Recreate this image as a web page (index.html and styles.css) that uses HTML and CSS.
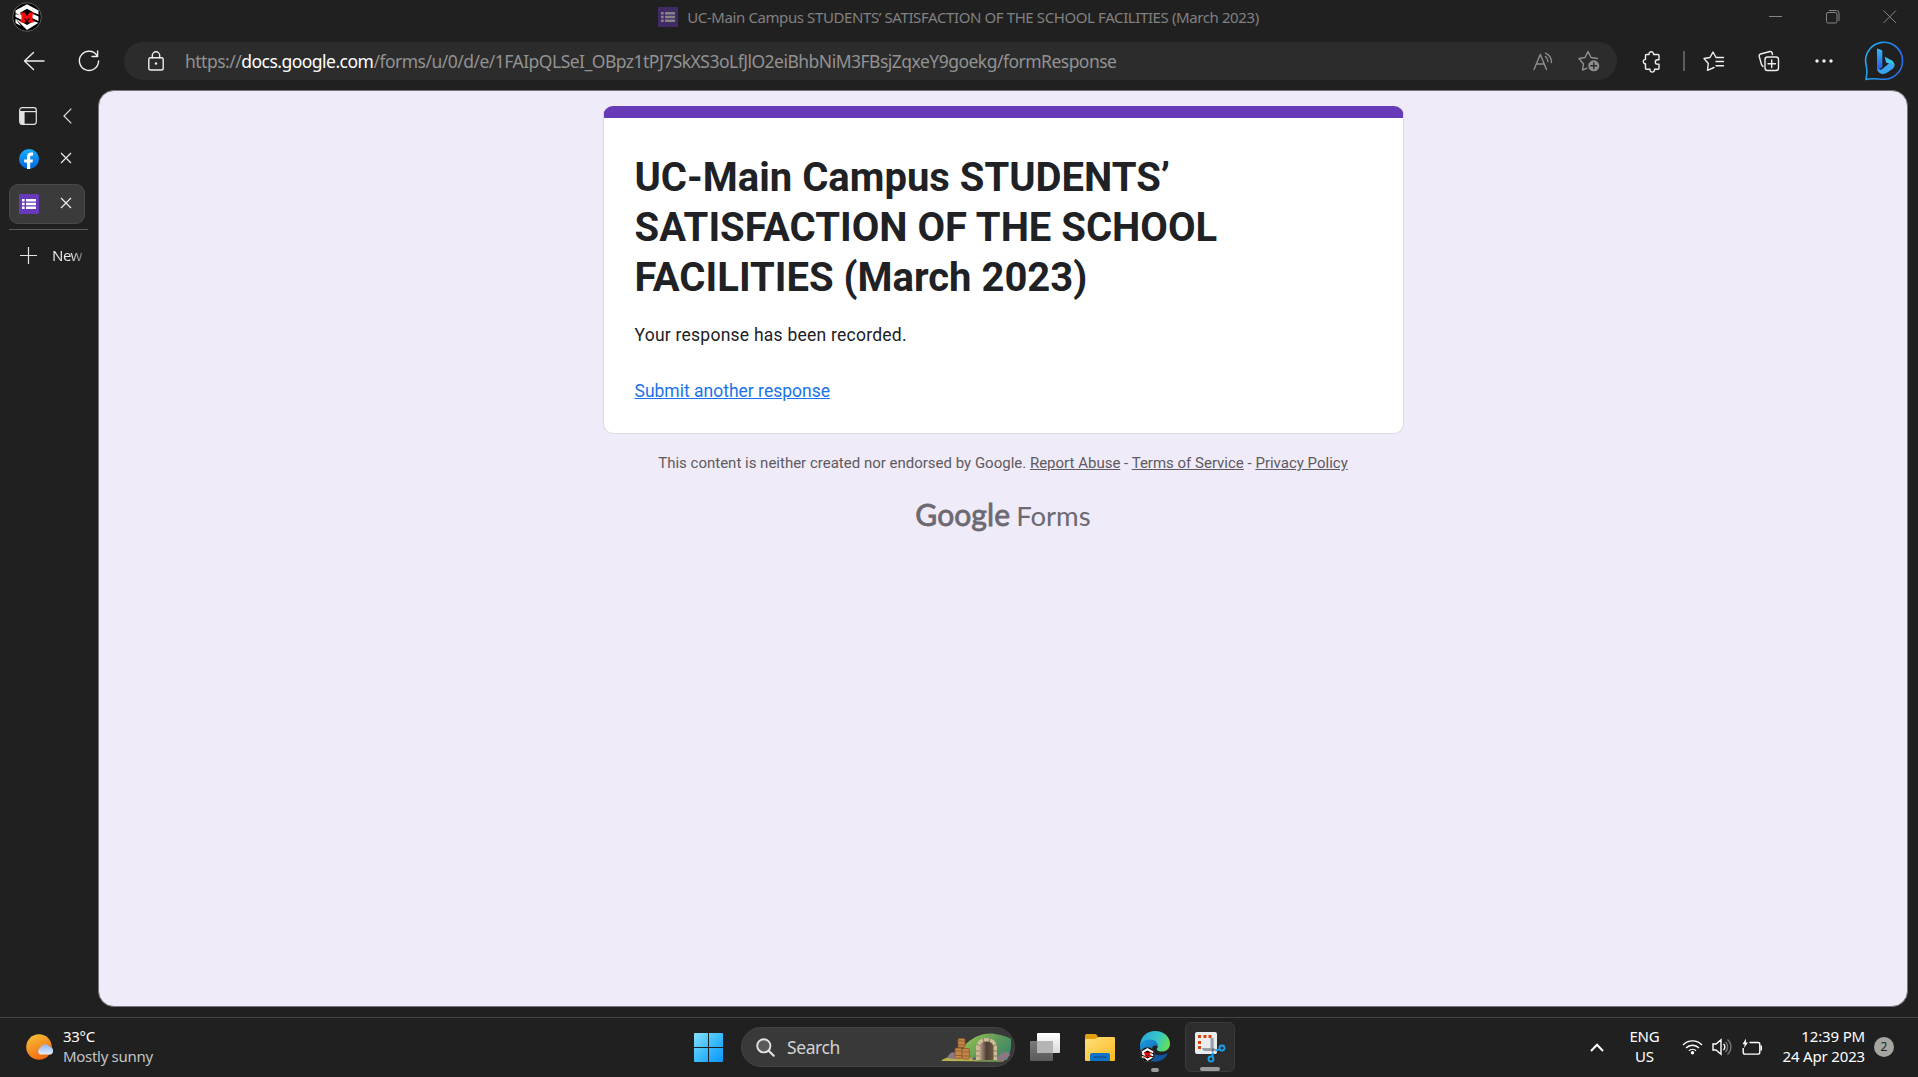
FILE: index.html
```html
<!DOCTYPE html>
<html lang="en">
<head>
<meta charset="utf-8">
<title>UC-Main Campus STUDENTS’ SATISFACTION OF THE SCHOOL FACILITIES (March 2023)</title>
<link rel="stylesheet" href="styles.css">
</head>
<body>
<svg class="defs" width="0" height="0">
  <defs>
    <linearGradient id="fb" x1="0" y1="0" x2="0" y2="1"><stop offset="0" stop-color="#19b0fb"/><stop offset="1" stop-color="#0165e2"/></linearGradient>
    <linearGradient id="bingRing" x1="0" y1="0" x2="1" y2="0.3"><stop offset="0" stop-color="#1bb5e8"/><stop offset="1" stop-color="#2b6ff0"/></linearGradient>
    <linearGradient id="bingB" x1="0" y1="0" x2="0" y2="1"><stop offset="0" stop-color="#3bb8fa"/><stop offset="1" stop-color="#2455e6"/></linearGradient>
    <linearGradient id="bingC" x1="0" y1="0" x2="1" y2="0"><stop offset="0" stop-color="#3fb6f7"/><stop offset="1" stop-color="#35d5e8"/></linearGradient>
    <linearGradient id="sun" x1="0.2" y1="0" x2="0.7" y2="1"><stop offset="0" stop-color="#f7bf36"/><stop offset="1" stop-color="#f0640e"/></linearGradient>
    <linearGradient id="cloud" x1="0" y1="0" x2="0" y2="1"><stop offset="0" stop-color="#8fb6f0"/><stop offset="1" stop-color="#e3eeff"/></linearGradient>
    <linearGradient id="win" gradientUnits="userSpaceOnUse" x1="0" y1="0" x2="29" y2="29"><stop offset="0" stop-color="#85e0fd"/><stop offset="0.5" stop-color="#3bbcfb"/><stop offset="1" stop-color="#0a95fb"/></linearGradient>
    <linearGradient id="hill" x1="0" y1="0" x2="1" y2="0.6"><stop offset="0" stop-color="#9cc653"/><stop offset="0.6" stop-color="#5f9a58"/><stop offset="1" stop-color="#3f8a68"/></linearGradient>
    <linearGradient id="door" x1="0" y1="0" x2="1" y2="0"><stop offset="0" stop-color="#c2a68e"/><stop offset="0.5" stop-color="#4f3f35"/><stop offset="1" stop-color="#6d5846"/></linearGradient>
    <linearGradient id="tv1" x1="0" y1="0" x2="0" y2="1"><stop offset="0" stop-color="#ffffff"/><stop offset="1" stop-color="#d9d9d9"/></linearGradient>
    <linearGradient id="tv2" x1="0" y1="0" x2="0" y2="1"><stop offset="0" stop-color="#7b7b7b"/><stop offset="1" stop-color="#5a5a5a"/></linearGradient>
    <linearGradient id="folder" x1="0" y1="0" x2="1" y2="1"><stop offset="0" stop-color="#ffe07a"/><stop offset="1" stop-color="#fdba20"/></linearGradient>
    <linearGradient id="edgeTop" x1="0" y1="0.3" x2="1" y2="0.6"><stop offset="0" stop-color="#2aa5dc"/><stop offset="0.55" stop-color="#37c6c9"/><stop offset="1" stop-color="#66e052"/></linearGradient>
    <linearGradient id="edgeLow" x1="0" y1="0" x2="1" y2="1"><stop offset="0" stop-color="#1b9de2"/><stop offset="1" stop-color="#0f54a4"/></linearGradient>
    <symbol id="profile" viewBox="0 0 30 30">
      <circle cx="15" cy="15" r="14.300" fill="#000" stroke="#5c5c5c"/>
      <path d="M3.500 8.500 15 2.200 26.500 8.500V12.500L21.500 10.500 15 6.800 8.500 10.500V12.300L10 13V18L3.500 15V12L8 13.500 3.500 11ZM20 11.500 26.500 14.500V19L20 16ZM3.500 16.800 9 19.500 15 23 21.500 19.300 26.500 20.800 15 28ZM3.500 16.800V21L9 24Z" fill="#fff"/>
      <path d="M8.500 10.500h4.200L15 14.200l2.300-3.700h4.200v2.300h-1V18h1v2.500h-5.200V18h1v-2.800L15 18.500l-2.300-3.300V18h1v2.500H8.500V18h1v-5.200h-1z" fill="#fa0a0a"/>
    </symbol>
    <symbol id="forms" viewBox="0 0 20 20">
      <rect width="20" height="20" rx="1" fill="#673ab7" stroke="none"/>
      <path d="M3 5h2.600v2.400H3zm0 3.800h2.600v2.400H3zm0 3.800h2.600V15H3zM7 5h10v2.400H7zm0 3.800h10v2.400H7zm0 3.800h10V15H7z" fill="#fff" stroke="none"/>
    </symbol>
    <symbol id="close" viewBox="0 0 12 12"><path d="m1 1 10 10M11 1 1 11" fill="none" stroke="currentColor" stroke-width="1.200"/></symbol>
  </defs>
</svg>

<header class="titlebar">
  <svg class="profile" width="30" height="30"><use href="#profile"/></svg>
  <div class="window-title">
    <svg width="20" height="20"><use href="#forms"/></svg>
    <span class="window-name">UC-Main Campus STUDENTS’ SATISFACTION OF THE SCHOOL FACILITIES (March 2023)</span>
  </div>
  <div class="window-buttons">
    <svg width="14" height="14" viewBox="0 0 14 14"><path d="M0 6.500h13"/></svg>
    <svg width="14" height="14" viewBox="0 0 14 14"><rect x=".5" y="2.500" width="10.500" height="10.500" rx="1.500"/><path d="M3 .5h7.500a2.500 2.500 0 0 1 2.500 2.500v8"/></svg>
    <svg width="14" height="14" viewBox="0 0 14 14"><path d="m.5.5 12.500 12.500M13 .5.500 13"/></svg>
  </div>
</header>

<nav class="toolbar">
  <svg class="back" width="22" height="20" viewBox="0 0 22 20"><path d="M21 10H1.500M10.500 1.500 1.500 10l9 8.500"/></svg>
  <svg class="reload" width="22" height="22" viewBox="0 0 22 22"><path d="M19 5.500A9.600 9.600 0 1 0 20.600 11M19.600 1v5.500H14"/></svg>
  <div class="address">
    <svg class="lock" width="16" height="20" viewBox="0 0 16 20"><rect x=".8" y="6.800" width="14.400" height="12.200" rx="1.800"/><path d="M4.300 6.800V4.500a3.700 3.700 0 0 1 7.400 0v2.300"/><circle cx="8" cy="12.500" r="1.200" class="solid"/></svg>
    <span class="url">https://<b>docs.google.com</b>/forms/u/0/d/e/1FAIpQLSeI_OBpz1tPJ7SkXS3oLfJlO2eiBhbNiM3FBsjZqxeY9goekg/formResponse</span>
    <svg class="read" width="20" height="19" viewBox="0 0 20 19"><path d="M1 17.500 7.300 2.500l6.200 15M3.300 12h8M12.500 4.500a7 7 0 0 1 2.500 5M12.500 1.200a10 10 0 0 1 6 9.300"/></svg>
    <svg class="fav" width="22" height="22" viewBox="0 0 22 22"><path d="M9 18.200 4.500 20l1-6L1 8.500l6-1L10 1.500l3 6 6.500 1"/><circle cx="15.800" cy="15.800" r="5.500" class="badge"/><path d="M15.800 12.800v6M12.800 15.800h6" class="plus"/></svg>
  </div>
  <svg class="puzzle" width="20" height="21" viewBox="0 0 20 21"><path d="M4.500 3.500h2.500a2.300 2.300 0 1 1 4.500 0h4.500q1 0 1 1v4.200h-1.500a2.200 2.200 0 0 0 0 4.400H17v4.200q0 1-1 1h-3.500a2.300 2.300 0 1 1-4.500 0H4.500q-1 0-1-1v-4.500a2.200 2.200 0 1 1 0-4.400V4.500q0-1 1-1z"/></svg>
  <span class="divider"></span>
  <svg class="favs" width="21" height="20" viewBox="0 0 21 20"><path d="M11 16.500 4.500 19.300l.8-6.800L1 7.500l6-1 3-5.500 3 5.500h7.500M13 10.500h7.500M13 14.700h7.500"/></svg>
  <svg class="collections" width="22" height="22" viewBox="0 0 22 22"><rect x="7" y="7" width="13.500" height="13.500" rx="2.500"/><path d="M13.700 10v7.500M10 13.700h7.500M5 16.500 3.500 14.500 1.200 6.200Q1 4.500 2.500 4L12 1.500q1.500-.3 2 1L14.500 4.500"/></svg>
  <svg class="more" width="18" height="4" viewBox="0 0 18 4"><circle cx="2" cy="2" r="1.700"/><circle cx="9" cy="2" r="1.700"/><circle cx="16" cy="2" r="1.700"/></svg>
  <svg class="bing" width="40" height="40" viewBox="0 0 40 40"><path d="M2 38.500C3 33 3.500 29.500 2.300 25A18.500 18.500 0 1 1 20 38.300C14 38.300 8 36.800 2 38.500Z" class="ring"/><path d="M13 7.500 17.500 9q.8.300.8 1.200V26L14 29.500q-1-.8-1-2Z" fill="url(#bingB)"/><path d="M20.700 15.700 27 19q3.500 2 3.500 5.500L22 21.500Z" fill="url(#bingC)"/><path d="M13 26q1 4 5 2.300L25.500 22q5 .5 5 2.500a5 5 0 0 1-2 3.500l-6 4q-3.500 2-7 0-2.500-2-2.500-6Z" fill="#38a5f3"/></svg>
</nav>

<div class="workspace">
  <aside class="tabs">
    <div class="tabs-head">
      <svg width="18" height="18" viewBox="0 0 18 18"><rect x=".7" y=".7" width="16.600" height="16.600" rx="2.500"/><path d="M1 4.600h16"/><path d="M1 5h4v12H2z" fill="#e4e4e4"/></svg>
      <svg width="9" height="16" viewBox="0 0 9 16"><path d="M8.300.7 1 8l7.300 7.300"/></svg>
    </div>
    <div class="tab">
      <svg width="20" height="20" viewBox="0 0 20 20"><g stroke="none"><circle cx="10" cy="10" r="10" fill="url(#fb)"/><path d="M8 20v-6.500H5.200v-3H8V8.200C8 5.200 9.600 3.600 12.200 3.600c.9 0 1.800.2 1.800.2v2.600h-1.200c-1.200 0-1.600.8-1.600 1.600v2.500H14l-.5 3h-2.300V20z" fill="#fff"/></g></svg>
      <svg width="12" height="12"><use href="#close"/></svg>
    </div>
    <div class="tab tab-active">
      <svg width="20" height="20"><use href="#forms"/></svg>
      <svg width="12" height="12"><use href="#close"/></svg>
    </div>
    <div class="tab-new">
      <svg width="17" height="17" viewBox="0 0 17 17"><path d="M8.500 0v17M0 8.500h17"/></svg>
      <span>New</span>
    </div>
  </aside>

  <main class="page">
    <section class="card">
      <h1>UC-Main Campus STUDENTS’ SATISFACTION OF THE SCHOOL FACILITIES (March 2023)</h1>
      <p class="message">Your response has been recorded.</p>
      <a class="again">Submit another response</a>
    </section>
    <p class="legal">This content is neither created nor endorsed by Google. <a>Report Abuse</a> - <a>Terms of Service</a> - <a>Privacy Policy</a></p>
    <div class="brand"><span class="brand-google">Google</span><span class="brand-forms">Forms</span></div>
  </main>
</div>

<footer class="taskbar">
  <div class="weather">
    <svg width="28" height="26" viewBox="0 0 28 26"><circle cx="13" cy="13" r="12.800" fill="url(#sun)"/><path d="M14 20.500a3.800 3.800 0 0 1 0-6.500 5.500 5.500 0 0 1 9.500-1.500 4.200 4.200 0 0 1 1 8z" fill="url(#cloud)"/></svg>
    <div class="forecast"><div class="temp">33°C</div><div class="sky">Mostly sunny</div></div>
  </div>
  <div class="apps">
    <svg class="start" width="29" height="29" viewBox="0 0 29 29"><path d="M0 1q0-1 1-1h13v14H0zM15 0h13q1 0 1 1v13H15zM0 15h14v14H1q-1 0-1-1zM15 15h14v13q0 1-1 1H15z" fill="url(#win)"/></svg>
    <div class="search">
      <svg width="19" height="19" viewBox="0 0 19 19"><circle cx="7.800" cy="7.800" r="6.600" fill="#5a5a5a" stroke="#e2e2e2" stroke-width="1.900"/><path d="m12.700 12.700 5 5" stroke="#e2e2e2" stroke-width="2.200" stroke-linecap="round"/></svg>
      <span>Search</span>
      <svg class="scene" width="71" height="29" viewBox="0 0 71 29">
        <path d="M23 13C31 4 43-1 54 1Q66 3 70 6Q71 18 66 27H24Z" fill="url(#hill)"/>
        <path d="M0 28Q6 22 20 25H60Q66 26 62 28.500Z" fill="#b9b052"/>
        <path d="M6 25Q10 17 14 20V26ZM55 28Q58 18 67 19L69 22Q64 28 58 28.500Z" fill="#8c7785"/>
        <path d="M31 27Q32 22 36 25V27Z" fill="#6b5f72"/>
        <g fill="#c58546" stroke="#8b582e" stroke-width=".8"><rect x="17" y="5.500" width="7" height="9" rx="1.500"/><rect x="14" y="15" width="7" height="10.500" rx="1.500"/><rect x="21" y="15.500" width="7.500" height="10.500" rx="1.500"/><path d="M17 8h7M17 12h7M14 18h7M14 22.500h7M21 19h7.500M21 23h7.500"/></g>
        <path d="M35 27V14Q36 5 45.500 5T56 14V27Z" fill="#cdbd96"/><path d="M35 18h21M36 11l5 3M56 11l-5 3M42 5l1 4M49 5l-1 4M35 23h21" stroke="#8a7a5c" stroke-width="1"/>
        <path d="M38.500 27V14Q39 8.500 45.500 8.500T52.500 14V27Z" fill="url(#door)"/>
        <path d="M37 27h20l2 1.500H34Z" fill="#6f9650"/>
      </svg>
    </div>
    <svg class="views" width="30" height="28" viewBox="0 0 30 28"><rect x="7" width="23" height="20" rx="1" fill="url(#tv1)"/><rect y="8" width="23" height="20" rx="1" fill="url(#tv2)"/><path d="M7 8h16v12H7z" fill="#b5b5b5"/></svg>
    <svg class="files" width="30" height="27" viewBox="0 0 30 27"><path d="M0 1.500Q0 0 1.500 0H10q1.500 0 2.200 1.500L13 3.500 11 7H0Z" fill="#e0a010"/><path d="M0 6q0-1 1.500-1H9.500q1.500 0 2.500-1t2-1H29q1 0 1 1.500V26q0 1-1 1H1q-1 0-1-1Z" fill="url(#folder)"/><path d="M5 27v-6q0-2 2-2h16q2 0 2 2v6Z" fill="#1174c9"/><path d="M8.500 23h13" stroke="#0b4d91" stroke-width="1.300"/></svg>
    <div class="app">
      <svg width="30" height="31" viewBox="0 0 30 31">
        <path d="M0 14.500C1 9 5 6.500 11 7.500c5 .8 8 4 7.500 8.500C14 12.500 11 16 12.500 20c2 5.500 8.500 6.500 14.500 3.500C24.500 28 20 30.500 15 30.500 6 30.500 0 23.500 0 14.500Z" fill="url(#edgeLow)"/>
        <path d="M11.500 17.500c0 6 7.500 9 16 4.500-1 4.500-6.500 8.500-12.500 8.500-5.500-2-6.500-9-3.500-13Z" fill="#11559f"/>
        <path d="M0 14C1 5 7 0 15 0c9 0 15 6 15 12.500C30 18 26 20.500 22 20.500c-4 0-6-1.500-5-3 3-4-1-9-7-9-5 0-9 3-10 5.500Z" fill="url(#edgeTop)"/>
        <svg x="0" y="16" width="15" height="15"><use href="#profile"/></svg>
      </svg>
      <i class="dot"></i>
    </div>
    <div class="app app-active">
      <svg width="31" height="31" viewBox="0 0 31 31"><rect width="22" height="22" rx="2" fill="#e9edf0"/><path d="M4.500 17v-3M4.500 12V9M4.500 6V3M8.500 4.500h3M13.500 4.500h3" fill="none" stroke="#d8400c" stroke-width="3"/><path d="M15.500 6h3.200v14h-1.800l-1.400-2Z" fill="#9aa2a8"/><path d="M7 16h12l3 2-2 1H9q-2-.8-2-3Z" fill="#9aa2a8"/><circle cx="17.700" cy="17.700" r="1.200" fill="#5d666d"/><circle cx="27" cy="16" r="2.500" fill="none" stroke="#1aa0e8" stroke-width="1.900"/><circle cx="16" cy="27" r="2.500" fill="none" stroke="#1aa0e8" stroke-width="1.900"/><path d="m20.500 18.500 4.500-1.200M18 20.500l-.8 4.500" stroke="#1aa0e8" stroke-width="1.900"/></svg>
      <i class="dot dot-wide"></i>
    </div>
  </div>
  <div class="tray">
    <svg class="up" width="14" height="9" viewBox="0 0 14 9"><path d="m1 8 6-6.300L13 8"/></svg>
    <div class="lang">ENG<br>US</div>
    <svg class="wifi" width="21" height="16" viewBox="0 0 21 16"><path d="M1 6a13 13 0 0 1 19 0M4 9a9 9 0 0 1 13 0M7 11.800a5 5 0 0 1 7 0"/><circle cx="10.500" cy="13.700" r="1.700" class="solid"/></svg>
    <svg class="volume" width="21" height="18" viewBox="0 0 21 18"><path d="M1 6h3l5-4.300v14.600L4 12H1ZM11.500 6a4 4 0 0 1 0 6"/><path d="M13.500 4a7 7 0 0 1 0 10M15.500 1.500a10 10 0 0 1 0 15" class="dim"/></svg>
    <svg class="battery" width="21" height="18" viewBox="0 0 21 18"><path d="M7.500 4.500h8.500q1.800 0 1.800 1.800v8q0 1.800-1.800 1.800H3q-1.800 0-1.800-1.800V10"/><path d="M18.500 7.500h1.500v5h-1.500z" class="solid"/><path d="M4 .5.500 6.200h2.200L2 10l4-5.500H3.800Z" class="solid"/></svg>
    <div class="clock">12:39 PM<br>24 Apr 2023</div>
    <span class="count">2</span>
  </div>
</footer>
</body>
</html>
```
FILE: styles.css
```css
* { box-sizing: border-box; }
body {
  margin: 0;
  width: 1918px;
  height: 1077px;
  overflow: hidden;
  display: grid;
  grid-template-columns: 1918px;
  grid-template-rows: 35px 56px 926px 60px;
  background: #202020;
  color: #fff;
  font-family: "Noto Sans", "Open Sans", sans-serif;
}
.defs { position: absolute; }
svg { display: block; flex: none; overflow: visible; }

.titlebar {
  display: grid;
  grid-template-columns: 1fr auto 1fr;
  align-items: center;
  padding: 0 13px 1px 12px;
}
.window-title { display: flex; align-items: center; gap: 9px; color: #818181; font-size: 15px; white-space: nowrap; }
.window-title svg { opacity: .45; }
.window-name { letter-spacing: -.395px; }
.window-buttons { display: flex; justify-content: flex-end; gap: 43px; padding-right: 8px; }
.window-buttons svg { fill: none; stroke: #848484; stroke-width: 1; }

.toolbar { display: flex; align-items: center; padding: 0 14px 4px 23px; }
.toolbar svg { fill: none; stroke: #eee; stroke-width: 1.4; stroke-linejoin: round; stroke-linecap: round; }
.reload { margin-left: 33px; }
.address {
  display: flex;
  align-items: center;
  width: 1494px;
  height: 38px;
  margin-left: 24px;
  padding: 0 17px 0 24px;
  border-radius: 19px;
  background: #2c2c2c;
}
.lock .solid { fill: #eee; stroke: none; }
.url { flex: 1; margin-left: 21px; color: #929292; font-size: 17.500px; letter-spacing: -.515px; white-space: nowrap; }
.url b { font-weight: 400; color: #fff; }
.toolbar .read, .toolbar .fav { stroke: #8f8f8f; }
.toolbar .fav { margin-left: 25px; }
.fav .badge { fill: #8f8f8f; stroke: none; }
.fav .plus { stroke: #2c2c2c; }
.puzzle { margin-left: 25px; }
.divider { width: 2px; height: 20px; margin-left: 21px; background: #5c5c5c; }
.favs { margin-left: 18px; }
.collections { margin-left: 34px; }
.toolbar .more { margin-left: 35px; fill: #eee; stroke: none; }
.toolbar .bing { margin-left: 31px; stroke: none; }
.bing .ring { fill: none; stroke: url(#bingRing); stroke-width: 1.600; }

.workspace { display: grid; grid-template-columns: 98px 1810px; height: 916px; }
.tabs { padding: 6px 10px 0 9px; }
.tabs svg { fill: none; stroke: #e4e4e4; stroke-width: 1.200; }
.tabs-head { display: flex; align-items: center; gap: 26px; height: 38px; padding-left: 10px; }
.tab { display: flex; align-items: center; gap: 21px; width: 76px; height: 40px; margin-top: 4px; padding-left: 10px; border-radius: 9px; }
.tab svg:last-child { margin-bottom: 2px; color: #eee; }
.tab-active { margin-top: 5px; padding-left: 9px; border: 1px solid #484848; background: #3b3b3b; }
.tab-new { display: flex; align-items: center; gap: 15px; width: 79px; height: 51px; margin-top: 5px; padding-left: 11px; border-top: 1px solid #5c5c5c; font-size: 15px; }
.tab-new span { letter-spacing: -.5px; background: linear-gradient(90deg, #eee 60%, #777); background-clip: text; -webkit-background-clip: text; color: transparent; }

.page {
  display: flex;
  flex-direction: column;
  align-items: center;
  margin-top: -1px;
  height: 917px;
  padding-top: 15px;
  border: 1px solid #77747b;
  border-radius: 16px;
  background: #f0ebf8;
  font-family: Roboto, sans-serif;
  color: #202124;
}
.card {
  width: 801px;
  height: 328px;
  padding: 35px 29px 0 31px;
  border: 1px solid #dadce0;
  border-top: 12px solid #673ab7;
  border-radius: 10px;
  background: #fff;
}
.card h1 { margin: 0; font-size: 40px; line-height: 50px; font-weight: 700; }
.message { margin: 20px 0 0; font-size: 17.500px; line-height: 25px; letter-spacing: .24px; }
.again { display: block; margin-top: 31px; font-size: 17.500px; line-height: 25px; color: #1a73e8; text-decoration: underline; }
.legal { margin: 18px 0 0; font-size: 15px; line-height: 22px; color: #5d5a61; }
.legal a { text-decoration: underline; }
.brand { display: flex; align-items: baseline; gap: 6px; margin-top: 20px; line-height: 40px; color: #6c6972; font-family: Lato, sans-serif; }
.brand-google { font-size: 30px; letter-spacing: .1px; -webkit-text-stroke: .8px #6c6972; }
.brand-forms { font-size: 27.500px; }

.taskbar {
  display: grid;
  grid-template-columns: 1fr auto 1fr;
  grid-template-rows: 58px;
  border-top: 1px solid #444;
  background: #202020;
}
.weather { display: flex; align-items: center; gap: 9px; padding-left: 26px; font-size: 15px; line-height: 20px; }
.forecast { padding-bottom: 3px; letter-spacing: -.3px; }
.sky { color: #c4c4c4; }
.apps { display: flex; align-items: center; padding-left: 11px; }
.search { display: flex; align-items: center; width: 274px; height: 40px; margin-left: 18px; padding: 0 2px 0 14px; border: 1px solid #434343; border-radius: 20px; background: #393939; font-size: 17.500px; color: #d2d2d2; }
.search span { flex: 1; margin-left: 12px; letter-spacing: -.4px; }
.views { margin-left: 15px; }
.files { margin-left: 25px; }
.app { display: flex; flex-direction: column; align-items: center; width: 50px; height: 50px; margin-left: 15px; padding-top: 9px; border-radius: 6px; }
.app-active { margin-left: 5px; border: 1px solid #3b3b3b; background: #2d2d2d; }
.dot { width: 8px; height: 4px; margin-top: auto; border-radius: 2px; background: #9b9b9b; }
.dot-wide { width: 20px; }
.tray { display: flex; align-items: center; justify-content: flex-end; padding-right: 24px; font-size: 15px; line-height: 20px; }
.tray svg { fill: none; stroke: #fff; stroke-width: 1.400; }
.tray .up { stroke-width: 2; }
.tray .solid { fill: #fff; stroke: none; }
.tray .dim { stroke: #777; }
.lang { width: 40px; margin: 0 18px 0 20px; padding-bottom: 2px; text-align: center; letter-spacing: -.2px; }
.volume { margin-left: 9px; }
.battery { margin-left: 9px; }
.clock { margin-left: 19px; padding-bottom: 3px; text-align: right; white-space: nowrap; letter-spacing: -.16px; }
.count { display: grid; place-items: center; width: 20px; height: 20px; margin-left: 9px; border-radius: 50%; background: #a5a5a1; color: #222; font-size: 12px; }
```
